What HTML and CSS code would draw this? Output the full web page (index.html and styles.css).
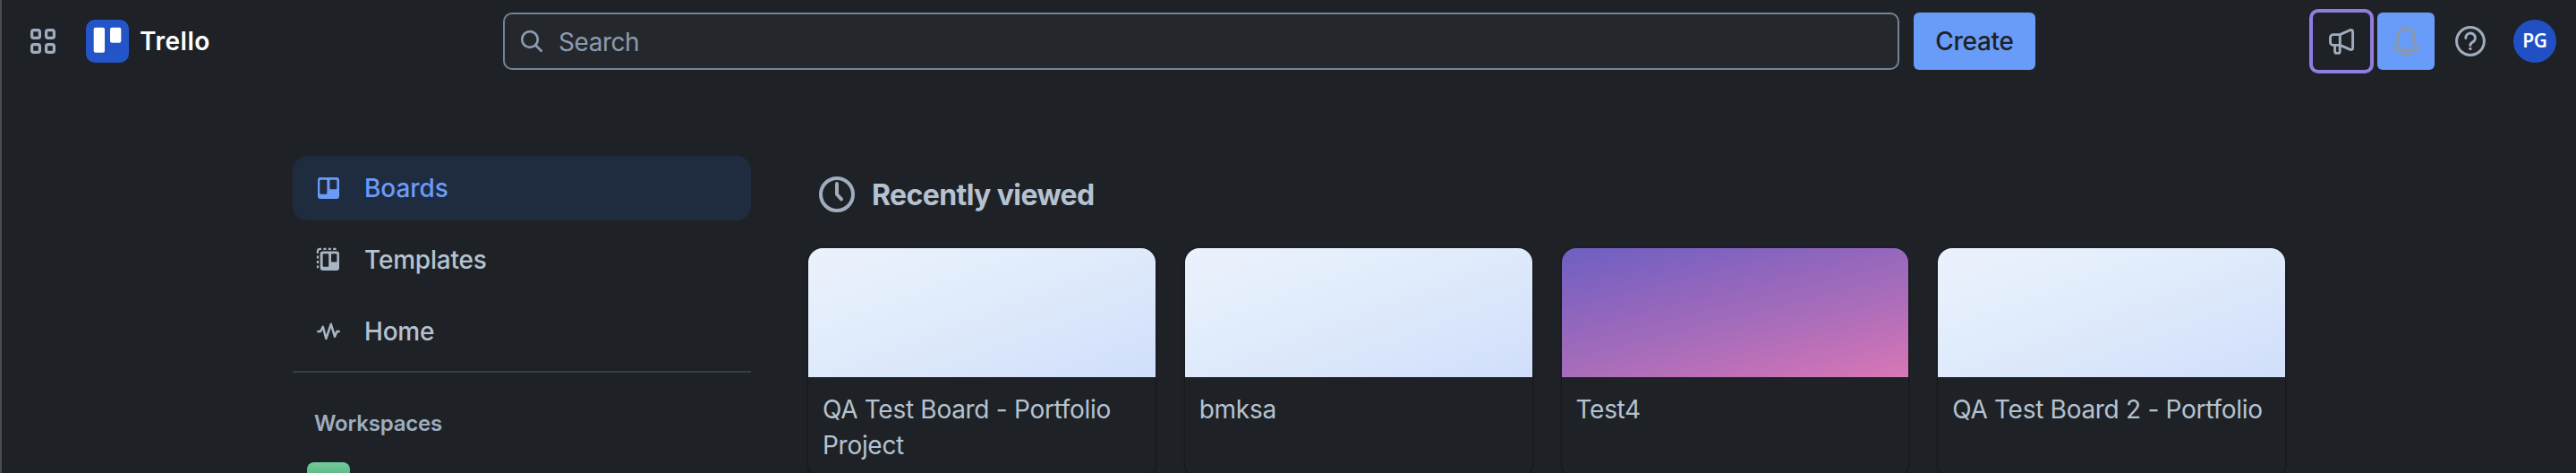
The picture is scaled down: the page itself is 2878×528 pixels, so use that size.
FILE: index.html
```html
<!DOCTYPE html>
<html lang="en">
<head>
<meta charset="utf-8">
<title>Boards | Trello</title>
<link rel="stylesheet" href="styles.css">
</head>
<body>
<header class="topbar">
  <div class="brand">
    <svg class="apps" viewBox="0 0 28 28"><g fill="none" stroke="#9fadbf" stroke-width="3.2"><rect x="1.6" y="1.6" width="8.8" height="8.8" rx="2.2"/><rect x="17.6" y="1.6" width="8.8" height="8.8" rx="2.2"/><rect x="1.6" y="17.6" width="8.8" height="8.8" rx="2.2"/><rect x="17.6" y="17.6" width="8.8" height="8.8" rx="2.2"/></g></svg>
    <svg class="logo" viewBox="0 0 48 48"><rect width="48" height="48" rx="10" fill="#2355c8"/><rect x="8.7" y="8.7" width="12.3" height="28" rx="2" fill="#fff"/><rect x="27" y="8.7" width="12.3" height="17" rx="2" fill="#fff"/></svg>
    <span class="name">Trello</span>
  </div>
  <div class="search">
    <svg class="search-icon" viewBox="0 0 26 26"><g fill="none" stroke="#8c9bad" stroke-width="2.7"><circle cx="11" cy="11" r="8.8"/><path d="M17.2 17.2 23.7 23.7" stroke-linecap="round"/></g></svg>
    <span class="placeholder">Search</span>
  </div>
  <button class="create">Create</button>
  <div class="actions">
    <div class="action focused">
      <svg viewBox="0 0 64 64"><g fill="none" stroke="#9fadbf" stroke-width="2.9" stroke-linejoin="round"><path d="M30.3 24.6H23a3.4 3.4 0 0 0-3.5 3.4v5a3.4 3.4 0 0 0 3.5 3.4h7.3z"/><path d="M30.3 24.6 41.3 19.7Q44.6 18.7 44.6 22v17.4Q44.6 42.3 41.3 41.2L30.3 36.4"/><path d="M24.6 36.6v6.6q0 2.2 2.2 2.2h1.4q2 0 2-2.2V37"/></g></svg>
    </div>
    <div class="action filled">
      <svg viewBox="0 0 64 64"><g fill="none" stroke="#8d98a6" stroke-width="3" stroke-linejoin="round"><path d="M32 17.6c-5.3 0-8.9 4-8.9 9.1v5.8c0 1.3-.4 2.3-1 3.3l-2.1 3.2c-1 1.6-.2 3 1.6 3h20.8c1.8 0 2.6-1.4 1.6-3l-2.1-3.2c-.6-1-1-2-1-3.3v-5.8c0-5.1-3.6-9.1-8.9-9.1z"/><path d="M26.8 42.5c.5 2.5 2.6 4.1 5.2 4.1s4.7-1.6 5.2-4.1"/></g></svg>
    </div>
    <div class="action">
      <svg viewBox="0 0 64 64"><g fill="none" stroke="#9fadbf" stroke-width="3"><circle cx="32" cy="32" r="15.4"/><path d="M26.8 28.4a5.3 5.3 0 1 1 7.8 4.6c-1.9 1-2.7 1.6-2.7 3.4" stroke-linecap="round"/></g><circle cx="31.9" cy="40.4" r="1.7" fill="#9fadbf"/></svg>
    </div>
    <div class="avatar">PG</div>
  </div>
</header>
<main class="content">
  <nav class="sidebar">
    <a class="item active">
      <svg viewBox="0 0 28 28"><path fill="#699cf8" fill-rule="evenodd" d="M5 2h18a3 3 0 0 1 3 3v18a3 3 0 0 1-3 3H5a3 3 0 0 1-3-3V5a3 3 0 0 1 3-3zM5.5 4.7a1.2 1.2 0 0 0-1.2 1.2v13.6a1.2 1.2 0 0 0 1.2 1.2h5.7a1.2 1.2 0 0 0 1.2-1.2V5.9a1.2 1.2 0 0 0-1.2-1.2zM16.6 4.7a1.2 1.2 0 0 0-1.2 1.2v8.2a1.2 1.2 0 0 0 1.2 1.2h5.6a1.2 1.2 0 0 0 1.2-1.2V5.9a1.2 1.2 0 0 0-1.2-1.2z"/></svg>
      <span>Boards</span>
    </a>
    <a class="item">
      <svg viewBox="0 0 28 28"><path fill="#a9b5c3" fill-rule="evenodd" d="M7.7 4.400H23a3 3 0 0 1 3 3v15.600a3 3 0 0 1-3 3H7.700a3 3 0 0 1-3-3V7.400a3 3 0 0 1 3-3zM8.600 7.200a1 1 0 0 0-1 1v12.500a1 1 0 0 0 1 1h4.600a1 1 0 0 0 1-1V8.200a1 1 0 0 0-1-1zM18 7.200a1 1 0 0 0-1 1v7.200a1 1 0 0 0 1 1h4.400a1 1 0 0 0 1-1V8.200a1 1 0 0 0-1-1z"/><path fill="none" stroke="#a9b5c3" stroke-width="2.200" d="M2 23.300v-2.900M2 18v-3M2 12.600v-3M1.900 6.800V4.600Q1.900 1.900 4.600 1.900H6M8.400 1.900h3M13.800 1.900h3M19.200 1.900h3.400"/></svg>
      <span>Templates</span>
    </a>
    <a class="item">
      <svg viewBox="0 0 28 28"><path fill="none" stroke="#a9b5c3" stroke-width="2.500" stroke-linecap="round" stroke-linejoin="round" d="M2.300 14H5l2.800-5.200L11.300 22l5.500-16.200L21 19.700l2.400-5.700h2.300"/></svg>
      <span>Home</span>
    </a>
    <hr class="divider">
    <h2 class="group">Workspaces</h2>
    <div class="workspace"></div>
  </nav>
  <section class="boards">
    <div class="heading">
      <svg viewBox="0 0 40 40"><g fill="none" stroke="#9fadbf" stroke-width="4"><circle cx="20" cy="20" r="18"/><path d="M20 8v12l5 5.300" stroke-linecap="round" stroke-linejoin="round"/></g></svg>
      <h1>Recently viewed</h1>
    </div>
    <div class="grid">
      <article class="card"><div class="cover snow"></div><p>QA Test Board - Portfolio Project</p></article>
      <article class="card"><div class="cover snow"></div><p>bmksa</p></article>
      <article class="card"><div class="cover sunset"></div><p>Test4</p></article>
      <article class="card"><div class="cover snow"></div><p>QA Test Board 2 - Portfolio</p></article>
    </div>
  </section>
</main>
</body>
</html>
```

FILE: styles.css
```css
* { box-sizing: border-box; }
body {
  display: flex;
  flex-direction: column;
  margin: 0;
  height: 528px;
  overflow: hidden;
  border-left: 2px solid #4a4c4f;
  background: #1e2226;
  color: #b6c2d1;
  font-family: Inter, "Liberation Sans", sans-serif;
  font-size: 28px;
}
svg { display: block; flex: none; }

.topbar { display: flex; flex: none; align-items: center; height: 92px; padding: 0 22px 0 32px; }
.brand { display: flex; align-items: center; width: 528px; }
.apps { width: 28px; height: 28px; }
.logo { width: 48px; height: 48px; margin-left: 34px; }
.name { margin-left: 12px; color: #fff; font-weight: 600; letter-spacing: 0.55px; }
.search {
  display: flex;
  align-items: center;
  width: 1560px;
  height: 64px;
  padding-left: 17px;
  border: 2px solid #738499;
  border-radius: 10px;
  background: #24282d;
}
.search-icon { width: 26px; height: 26px; }
.placeholder { margin: 2px 0 0 17px; color: #8c9bad; letter-spacing: -0.45px; }
.create {
  width: 136px;
  height: 64px;
  margin-left: 16px;
  padding: 0;
  border: 0;
  border-radius: 6px;
  background: #699cf8;
  color: #1e2226;
  font: 500 28px Inter, "Liberation Sans", sans-serif;
  letter-spacing: -0.28px;
}
.actions { display: flex; align-items: center; gap: 8px; margin-left: auto; }
.action { width: 64px; height: 64px; border-radius: 6px; }
.focused { box-shadow: 0 0 0 4px #8f7ee0; }
.filled { background: #699cf8; }
.avatar {
  width: 48px;
  height: 48px;
  margin-left: 8px;
  border-radius: 50%;
  background: #2150c4;
  color: #fff;
  font: 600 21px/47px "Noto Sans", sans-serif;
  letter-spacing: -0.3px;
  text-align: center;
}

.content { display: flex; flex: 1; gap: 64px; min-height: 0; overflow: hidden; padding: 82px 0 0 325px; }
.sidebar { width: 512px; }
.item {
  display: flex;
  align-items: center;
  gap: 26px;
  height: 72px;
  margin-bottom: 8px;
  padding-left: 26px;
  border-radius: 16px;
  font-weight: 500;
  letter-spacing: -0.2px;
}
.item svg { width: 28px; height: 28px; }
.active { background: #1f2b3f; color: #699cf8; letter-spacing: -0.08px; }
.divider { height: 2px; margin: 0; border: 0; background: #373c44; }
.group {
  margin: 41px 0 0 24px;
  color: #9fadbf;
  font-size: 24px;
  font-weight: 600;
  line-height: 32px;
  letter-spacing: -0.2px;
}
.workspace {
  width: 48px;
  height: 48px;
  margin: 27px 0 0 16px;
  border-radius: 8px;
  background: linear-gradient(#70cc9a, #3f7d5c);
}

.boards { width: 1650px; }
.heading { display: flex; align-items: center; gap: 19px; height: 48px; margin: 19px 0 0 12px; }
.heading svg { width: 40px; height: 40px; }
h1 { margin: 2px 0 0; font-size: 32px; font-weight: 650; line-height: 48px; letter-spacing: -0.6px; }
.grid { display: grid; grid-template-columns: repeat(4, 1fr); gap: 33px; margin-top: 36px; }
.card {
  height: 256px;
  overflow: hidden;
  border-radius: 16px;
  box-shadow: 0 1px 2px 1px #15181b;
}
.cover { height: 144px; }
.snow { background: linear-gradient(to bottom right, #ecf1fc, #e5effc 25%, #dbe7fa 62%, #d8e4fc 75%, #d0defa); }
.sunset { background: linear-gradient(166deg, #6d5fc3, #9166bd 35%, #a96dba 60%, #c171b8 80%, #d878b6); }
.card p { margin: 16px; line-height: 40px; letter-spacing: -0.29px; }
```
